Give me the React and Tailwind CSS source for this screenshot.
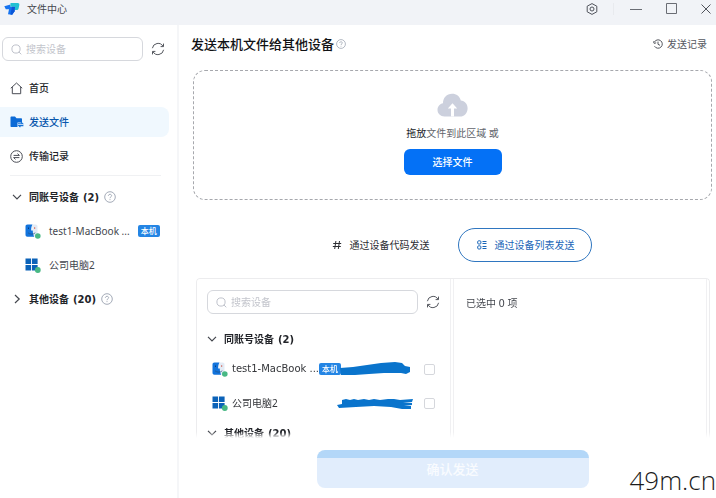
import React from 'react';

function Logo() {
  return (
    <svg width="16" height="13" viewBox="0 0 16 13" aria-hidden="true">
      <path d="M0.3 4.2L6.5 2.4V4.8H11L10.6 9.2L8.2 12.8L4 12.2L5 7.2H1.8Z" fill="#1673f0" />
      <path d="M6.5 1H13.6C15 1 15.6 1.7 15.3 3L14.6 6.4C14.3 7.5 13.6 8 12.5 8H10.8L11 4.8H6.5Z" fill="#22c1d2" />
      <path d="M8 4.8H11L10.6 9.2L8.2 12.8L6.4 12.5Z" fill="#0b56d8" />
    </svg>
  );
}

function SearchIcon() {
  return (
    <svg width="11" height="11" viewBox="0 0 11 11" fill="none" stroke="#bfc2cb" aria-hidden="true">
      <circle cx="5" cy="5" r="4.1" />
      <path d="M7.8 7.9L10.3 10.3" />
    </svg>
  );
}

function RefreshIcon() {
  return (
    <svg width="14" height="14" viewBox="0 0 14 14" fill="none" stroke="#55585f" aria-hidden="true">
      <path d="M1.4 6.2A5.7 5.7 0 0 1 12 4.3M12.6 7.8A5.7 5.7 0 0 1 2 9.7" />
      <path d="M12.5 1.6V4.6H9.6M1.5 12.4V9.4H4.4" />
    </svg>
  );
}

function HelpIcon({ size = 12 }) {
  return (
    <svg width={size} height={size} viewBox="0 0 12 12" fill="none" stroke="#9aa2b0" aria-hidden="true">
      <circle cx="6" cy="6" r="5.3" strokeWidth="0.9" />
      <path d="M4.4 4.8C4.4 2.8 7.6 2.8 7.6 4.7C7.6 5.9 6 5.8 6 7.2M6 8.2V9.1" strokeWidth="0.9" />
    </svg>
  );
}

function Chevron({ open }) {
  return (
    <svg width="10" height="10" viewBox="0 0 10 10" fill="none" stroke="#44474e" strokeWidth="1.2" aria-hidden="true">
      <path d={open ? 'M1 2.8L5 6.9L9 2.8' : 'M3 1L7.2 5L3 9'} />
    </svg>
  );
}

function HomeIcon() {
  return (
    <svg width="13" height="13" viewBox="0 0 13 13" fill="none" stroke="#4a4d55" strokeLinejoin="round" aria-hidden="true">
      <path d="M0.8 6.2L6.5 1L12.2 6.2M2.3 5V11.7H10.7V5" />
    </svg>
  );
}

function SendFolderIcon() {
  return (
    <svg width="14" height="12" viewBox="0 0 14 12" aria-hidden="true">
      <path d="M0.5 1.5C0.5 0.9 0.9 0.5 1.5 0.5H5L6.5 2.2H11C11.6 2.2 12 2.6 12 3.2V6.5H7.5V11H1.5C0.9 11 0.5 10.6 0.5 10Z" fill="#0b6ad6" />
      <path d="M8 7.7H12.6L11 6.2M13.4 9.6H8.8L10.4 11.2" fill="none" stroke="#1471d8" strokeWidth="1.1" />
    </svg>
  );
}

function TransferIcon() {
  return (
    <svg width="13" height="13" viewBox="0 0 13 13" fill="none" stroke="#4a4d55" aria-hidden="true">
      <circle cx="6.5" cy="6.5" r="5.8" />
      <path d="M3.6 5.4H9.4L7.5 3.6M9.4 7.6H3.6L5.5 9.4" />
    </svg>
  );
}

function MacIcon() {
  return (
    <svg className="shrink-0" width="16" height="15" viewBox="0 0 16 15" aria-hidden="true">
      <path d="M7 0.5H10.5C11.8 0.5 12.5 1.2 12.5 2.5V10.5C12.5 11.8 11.8 12.5 10.5 12.5H8Z" fill="#e3ebf5" />
      <path d="M2.5 0.5H7.4C6.4 2.8 6.1 4.4 6.2 6.4H7.8C7.8 8.6 8.2 10.8 9.2 12.8H2.5C1.2 12.8 0.5 12.1 0.5 10.8V2.5C0.5 1.2 1.2 0.5 2.5 0.5Z" fill="#1173dc" />
      <path d="M3.5 3.5V5" stroke="#0a3c80" />
      <path d="M9.7 3.3V4.8" stroke="#d2503e" />
      <path d="M3 8.8C5 10.6 8.3 10.6 10.3 8.8" fill="none" stroke="#24507f" strokeWidth="0.7" />
      <circle cx="12.8" cy="12" r="2.8" fill="#48b884" />
    </svg>
  );
}

function WindowsIcon() {
  return (
    <svg className="shrink-0" width="16" height="15" viewBox="0 0 16 15" aria-hidden="true">
      <path d="M0.5 0.5H6.1V6.1H0.5ZM7 0.5H12.6V6.1H7ZM0.5 7H6.1V12.6H0.5ZM7 7H12.6V12.6H7Z" fill="#0b62b8" />
      <circle cx="12.8" cy="12" r="2.9" fill="#48b884" />
    </svg>
  );
}

function CloudIcon() {
  return (
    <svg width="31" height="24" viewBox="0 0 31 24" aria-hidden="true">
      <path d="M7.5 23.5C3.4 23.5 0.5 20.6 0.5 16.8C0.5 13.4 2.8 10.8 6 10.2C6 4.8 9.8 0.8 15 0.8C19.5 0.8 22.8 3.4 23.8 7.4C27.8 7.6 30.6 11 30.6 15.2C30.6 20 27.4 23.5 23 23.5Z" fill="#ccd0dd" />
      <path d="M15.5 10.2L20.2 15.6H17V23.5H14V15.6H10.8Z" fill="#fff" />
    </svg>
  );
}

function SearchBox({ id }) {
  return (
    <div className="flex h-6 min-w-0 flex-1 items-center gap-1 rounded-md border border-[#d6d8dd] bg-white px-2">
      <label htmlFor={id} aria-label="搜索设备"><SearchIcon /></label>
      <input
        id={id}
        type="text"
        placeholder="搜索设备"
        className="min-w-0 flex-1 bg-transparent text-[10px] outline-none placeholder:text-[#c3c5cc]"
      />
    </div>
  );
}

function LocalTag() {
  return <span className="shrink-0 rounded-xs bg-[#2485e4] px-[3px] text-[8px] leading-3 font-medium text-white">本机</span>;
}

function GroupTitle({ name, count }) {
  return (
    <span>
      {name}<span className="ml-1 font-['DejaVu_Sans',sans-serif]">({count})</span>
    </span>
  );
}

function DeviceCheckbox() {
  return <input type="checkbox" className="ml-auto h-[11px] w-[11px] appearance-none rounded-xs border border-[#d5d7dc]" />;
}

const navItems = [
  { label: '首页', icon: <HomeIcon /> },
  { label: '发送文件', icon: <SendFolderIcon />, active: true },
  { label: '传输记录', icon: <TransferIcon /> },
];

function Sidebar() {
  return (
    <aside className="w-1/4 shrink-0 border-r-2 border-[#f5f6f8] pt-3">
      <div className="flex items-center gap-2 pr-3 pl-[2px]">
        <SearchBox id="sidebar-search" />
        <button aria-label="刷新"><RefreshIcon /></button>
      </div>

      <nav className="mt-3 flex flex-col gap-1 pr-2">
        {navItems.map((item) => (
          <a
            key={item.label}
            href="#"
            className={`flex h-[30px] items-center rounded-r-lg pl-[10px] font-medium ${item.active ? 'bg-[#f0f8fe] text-[#0a57ad]' : 'text-[#222429]'}`}
          >
            <span className="w-[19px]">{item.icon}</span>
            {item.label}
          </a>
        ))}
      </nav>

      <hr className="mt-1 mr-4 ml-[10px] border-[#f0f1f3]" />

      <div className="mt-1 flex flex-col">
        <button className="flex h-[34px] items-center gap-[5px] pl-3 font-bold text-[#222429]">
          <span className="w-3"><Chevron open /></span>
          <GroupTitle name="同账号设备" count={2} />
          <HelpIcon />
        </button>
        <div className="flex h-[34px] items-center gap-2 pl-[25px] text-[#44474e]">
          <MacIcon />
          <span>test1-MacBook ...</span>
          <LocalTag />
        </div>
        <div className="flex h-[34px] items-center gap-2 pl-[25px] text-[#44474e]">
          <WindowsIcon />
          <span>公司电脑2</span>
        </div>
        <button className="flex h-[34px] items-center gap-[5px] pl-3 font-bold text-[#222429]">
          <span className="w-3"><Chevron /></span>
          <GroupTitle name="其他设备" count={20} />
          <HelpIcon />
        </button>
      </div>
    </aside>
  );
}

function DevicePanel() {
  return (
    <div className="mt-4 mr-[6px] ml-[17px] grid min-h-0 flex-1 grid-cols-2 gap-[2px] overflow-hidden rounded-t border-x border-t border-[#ececee] [mask-image:linear-gradient(to_top,transparent_4px,black_10px)] pr-[2px]">
      <section className="border-r border-[#f0f0f2] pt-[11px]">
        <div className="flex items-center gap-2 px-[10px]">
          <SearchBox id="device-search" />
          <button aria-label="刷新"><RefreshIcon /></button>
        </div>
        <button className="mt-3 flex h-[26px] items-center gap-[5px] pl-[10px] font-bold text-[#222429]">
          <span className="w-3"><Chevron open /></span>
          <GroupTitle name="同账号设备" count={2} />
        </button>
        <label className="relative flex h-[34px] items-center px-[15px] text-[#333539]">
          <MacIcon />
          <span className="ml-1 font-['DejaVu_Sans',sans-serif]">test1-MacBook ...</span>
          <LocalTag />
          {/* hand-drawn cover over the device code */}
          <svg className="absolute right-[39px]" width="72" height="16" viewBox="0 0 72 16" aria-hidden="true">
            <path d="M1 7L14 6L28 4L42 2L56 1L63 2L66 5L71 6V11L67 13L62 12L45 12L30 13L16 14L2 14Z" fill="#0a74cc" />
          </svg>
          <DeviceCheckbox />
        </label>
        <label className="relative flex h-[34px] items-center px-[15px] text-[#333539]">
          <WindowsIcon />
          <span className="ml-1">公司电脑2</span>
          <svg className="absolute right-[36px]" width="78" height="14" viewBox="0 0 78 14" aria-hidden="true">
            <path d="M1 9L6 8L6 4L10 3L14 4L18 3L22 4L28 3L33 4L38 3L44 4L52 3L58 3L64 4L77 3L76 6L67 7L76 7L76 9L68 10L75 10V13L66 13L55 11L38 10L20 11L3 12Z" fill="#0a74cc" />
          </svg>
          <DeviceCheckbox />
        </label>
        <button className="mt-[5px] flex h-4 items-center gap-[5px] pl-[10px] font-bold text-[#222429]">
          <span className="w-3"><Chevron open /></span>
          <GroupTitle name="其他设备" count={20} />
        </button>
      </section>
      <section className="border-x border-[#f0f0f2] px-3 pt-4 text-[#44474e]">
        已选中 <span className="font-['DejaVu_Sans',sans-serif]">0</span> 项
      </section>
    </div>
  );
}

export default function App() {
  return (
    <div className="relative flex h-screen flex-col overflow-hidden bg-white font-['Noto_Sans','Noto_Sans_CJK_SC',sans-serif] text-[10px] leading-4">
      <header className="flex h-[25px] shrink-0 items-center bg-[#f1f3f7] pr-[5px] pb-2 pl-1 text-[#44474e]">
        <Logo />
        <h1 className="ml-[7px]">文件中心</h1>
        <button aria-label="设置" className="ml-auto">
          <svg width="12" height="12" viewBox="0 0 12 12" fill="none" stroke="#50535b">
            <path d="M6 0.6L10.8 3.2V8.8L6 11.4L1.2 8.8V3.2Z" strokeLinejoin="round" />
            <circle cx="6" cy="6" r="2" />
          </svg>
        </button>
        <span className="mr-4 ml-[15px] h-3 w-px bg-[#e8eaee]" />
        <button aria-label="最小化">
          <svg width="12" height="12" viewBox="0 0 12 12" stroke="#6a6d74"><path d="M0 6.5H12" /></svg>
        </button>
        <button aria-label="最大化" className="ml-6">
          <svg width="11" height="11" viewBox="0 0 11 11" fill="none" stroke="#6a6d74"><path d="M0.5 0.5H10.5V10.5H0.5Z" /></svg>
        </button>
        <button aria-label="关闭" className="ml-6">
          <svg width="10" height="10" viewBox="0 0 10 10" stroke="#50535b"><path d="M0.5 0.5L9.5 9.5M9.5 0.5L0.5 9.5" /></svg>
        </button>
      </header>

      <div className="flex min-h-0 flex-1">
        <Sidebar />

        <main className="flex min-w-0 flex-1 flex-col">
          <div className="flex items-center pt-[9px] pr-[9px] pl-3">
            <h2 className="text-[13px] leading-5 font-medium text-[#111215]">发送本机文件给其他设备</h2>
            <span className="ml-[2px]"><HelpIcon size={10} /></span>
            <a href="#" className="ml-auto flex items-center gap-1 text-[#55585f]">
              <svg width="10" height="10" viewBox="0 0 10 10" fill="none" stroke="#55585f" aria-hidden="true">
                <path d="M1.3 3.2A4.2 4.2 0 1 1 1.5 7.2M0.4 2.4L1.2 4.4L3.2 3.8M5 2.6V5.3L7 6.3" />
              </svg>
              发送记录
            </a>
          </div>

          <section className="mt-4 mr-1 ml-[14px] flex h-[130px] shrink-0 flex-col items-center rounded-xl border border-dashed border-[#a6a8ad] pt-[22px]">
            <CloudIcon />
            <p className="mt-2 text-[#62656c]"><span className="text-[#222429]">拖放</span>文件到此区域 或</p>
            <button className="mt-2 h-[26px] w-[98px] rounded-md bg-[#0471f6] font-medium text-white">选择文件</button>
          </section>

          <div className="mt-7 flex justify-center gap-[10px] pl-[10px]">
            <button className="flex h-[34px] w-[134px] items-center gap-2 pl-[18px] text-[#2c2e33]">
              <svg width="10" height="10" viewBox="0 0 10 10" stroke="#2c2e33" aria-hidden="true">
                <path d="M3.9 1L2.7 9M7.5 1L6.3 9M1.2 3.5H9.2M0.8 6.5H8.8" />
              </svg>
              通过设备代码发送
            </button>
            <button className="flex h-[34px] w-[134px] items-center gap-2 rounded-full border border-[#2f76c0] pl-[18px] text-[#1a66b8]">
              <svg width="10" height="10" viewBox="0 0 10 10" fill="none" stroke="#1a66b8" aria-hidden="true">
                <rect x="0.7" y="0.8" width="3.2" height="3.2" rx="1" />
                <rect x="0.7" y="5.8" width="3.2" height="3.2" rx="1" />
                <path d="M5.5 1.5H9.5M5.5 3.5H9.5M5.5 6.5H9.5M5.5 8.5H9.5" />
              </svg>
              通过设备列表发送
            </button>
          </div>

          <DevicePanel />

          <footer className="flex shrink-0 justify-center pt-2 pb-[10px] pl-[10px]">
            <button className="h-[38px] w-[272px] rounded-lg bg-[linear-gradient(#b3d7f8_8px,#e1edfc_8px)] text-[13px] font-medium text-white/80">
              确认发送
            </button>
          </footer>
        </main>
      </div>

      <span className="absolute right-0 bottom-0 font-['Open_Sans',sans-serif] text-[26px] leading-9 font-light text-[#1b1b1b]">49m.cn</span>
    </div>
  );
}
